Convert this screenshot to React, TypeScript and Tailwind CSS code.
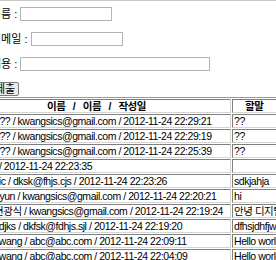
import React from 'react'

interface Post {
  info: string
  memo: string
}

const posts: Post[] = [
  { info: '??? / kwangsics@gmail.com / 2012-11-24 22:29:21', memo: '??' },
  { info: '??? / kwangsics@gmail.com / 2012-11-24 22:29:19', memo: '??' },
  { info: '??? / kwangsics@gmail.com / 2012-11-24 22:25:39', memo: '??' },
  { info: '/ / 2012-11-24 22:23:35', memo: '' },
  { info: 'sic / dksk@fhjs.cjs / 2012-11-24 22:23:26', memo: 'sdkjahja' },
  { info: 'hyun / kwangsics@gmail.com / 2012-11-24 22:20:21', memo: 'hi' },
  { info: '현광식 / kwangsics@gmail.com / 2012-11-24 22:19:24', memo: '안녕 디지털' },
  { info: 'sdjks / dkfsk@fdhjs.sjl / 2012-11-24 22:19:20', memo: 'dfhsjdhfjwer' },
  { info: 'kwang / abc@abc.com / 2012-11-24 22:09:11', memo: 'Hello world' },
  { info: 'kwang / abc@abc.com / 2012-11-24 22:04:09', memo: 'Hello world' },
]

// old-school inset cell border
const cell =
  'border border-t-[#808080] border-l-[#808080] border-b-[#d4d4d4] border-r-[#d4d4d4] p-0 h-[14px] leading-[12px] whitespace-nowrap'

export default function App() {
  return (
    <div className="w-[276px] h-[260px] overflow-hidden bg-white text-black font-['Liberation_Sans','Noto_Sans_CJK_KR',sans-serif]">
      <div className="h-px bg-[#c8c8c8]" />

      <div className="-ml-[9px] w-[420px] pt-[6px]">
        {/* guestbook form */}
        <form className="flex flex-col items-start text-[11px]">
          <label className="flex items-center h-[14px]">
            이름 :&nbsp;
            <input className="w-[92px] h-[14px] border border-[#b4b4b4] bg-white" />
          </label>
          <label className="flex items-center h-[14px] mt-[11px]">
            이메일 :&nbsp;
            <input className="w-[92px] h-[14px] border border-[#b4b4b4] bg-white" />
          </label>
          <label className="flex items-center h-[14px] mt-[11px]">
            내용 :&nbsp;
            <input className="w-[190px] h-[14px] border border-[#b4b4b4] bg-white" />
          </label>
          <button
            type="button"
            className="mt-[11px] h-[14px] px-[3px] leading-[12px] text-[11px] bg-[#ececec] border border-[#7a7a7a] rounded-[2px]"
          >
            제출
          </button>
        </form>

        {/* list */}
        <table className="mt-[1px] border-separate border-spacing-[1px] border border-[#9a9a9a] text-[10.5px] tracking-[-0.45px]">
          <thead>
            <tr>
              <th className={`${cell} w-[238px] text-left pl-[53px] font-bold`}>
                이름&nbsp;&nbsp;&nbsp;/&nbsp;&nbsp;&nbsp;이름&nbsp;&nbsp;&nbsp;/&nbsp;&nbsp;&nbsp;작성일
              </th>
              <th className={`${cell} w-[110px] text-left pl-[12px] font-bold`}>할말</th>
            </tr>
          </thead>
          <tbody>
            {posts.map((post, i) => (
              <tr key={i}>
                <td className={cell}>{post.info}</td>
                <td className={`${cell} pl-[1px]`}>{post.memo}</td>
              </tr>
            ))}
          </tbody>
        </table>
      </div>
    </div>
  )
}
